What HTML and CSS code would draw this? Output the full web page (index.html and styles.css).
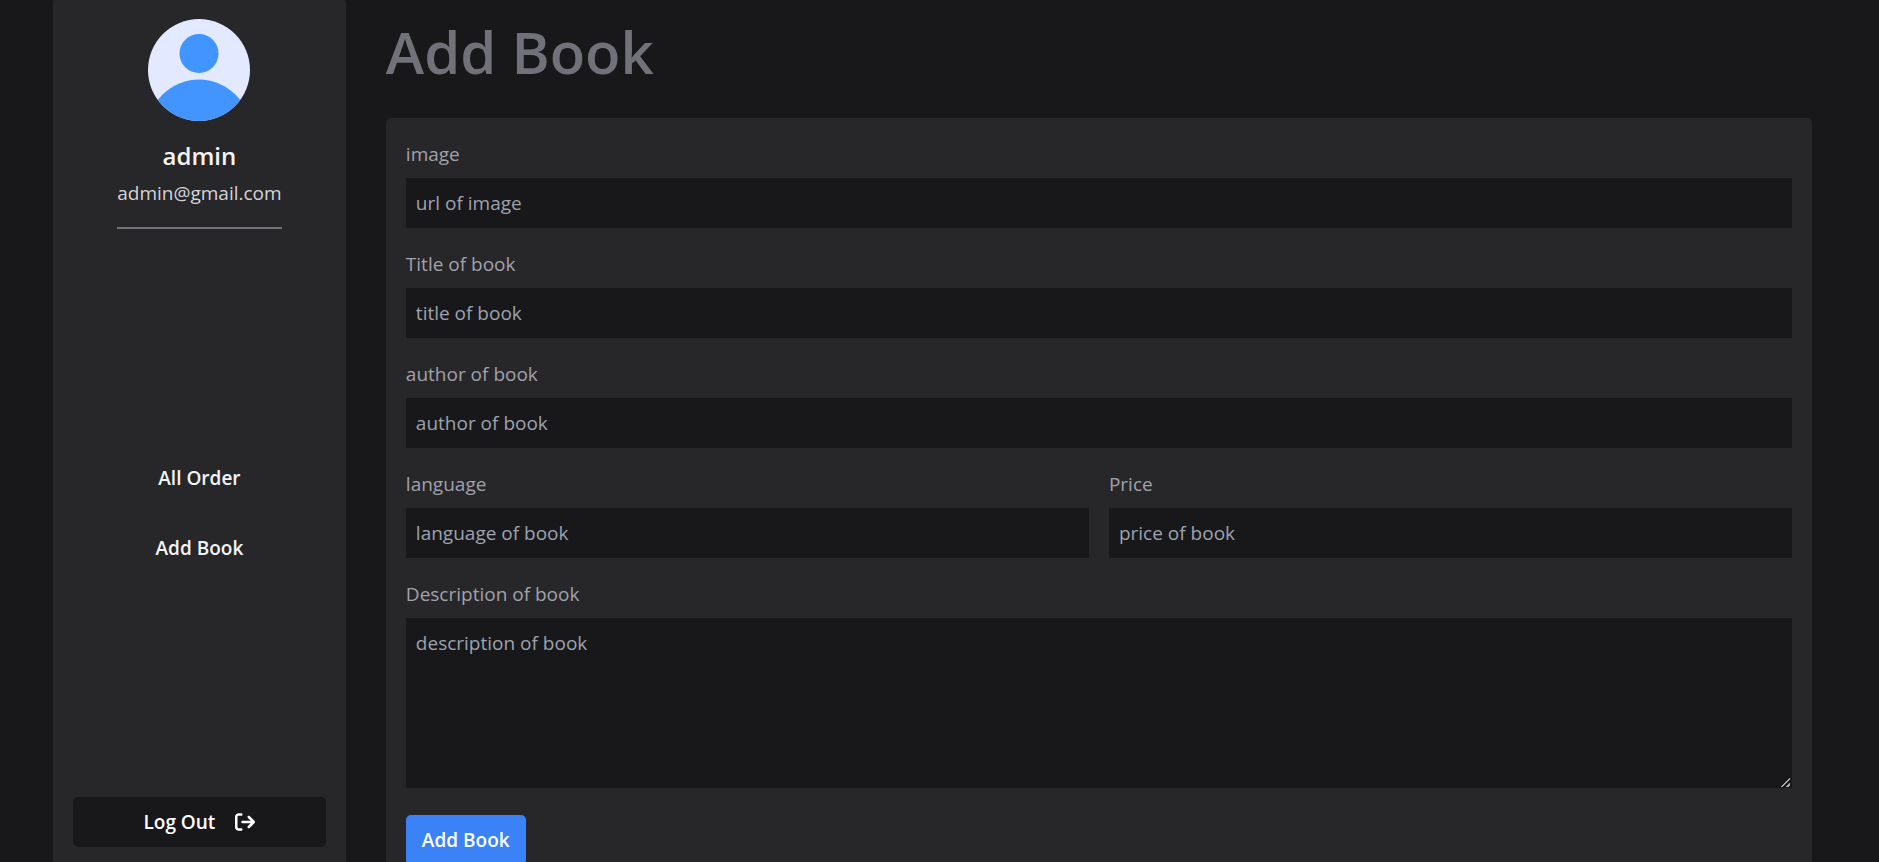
FILE: index.html
```html
<!DOCTYPE html>
<html lang="en">
<head>
<meta charset="utf-8">
<title>Add Book</title>
<link rel="stylesheet" href="styles.css">
</head>
<body>
<div class="layout">
  <aside class="sidebar">
    <div class="profile">
      <svg class="avatar" viewBox="0 0 102 102" role="img" aria-label="Profile picture">
        <defs><clipPath id="disc"><circle cx="51" cy="51" r="51"/></clipPath></defs>
        <circle cx="51" cy="51" r="51" fill="#e3eaff"/>
        <g fill="#4294ff" clip-path="url(#disc)">
          <circle cx="51" cy="34.500" r="19.500"/>
          <circle cx="51" cy="112" r="51.500"/>
        </g>
      </svg>
      <p class="name">admin</p>
      <p class="email">admin@gmail.com</p>
      <div class="rule"></div>
    </div>
    <nav class="menu">
      <a href="#orders">All Order</a>
      <a href="#add">Add Book</a>
    </nav>
    <button class="logout" type="button">Log Out
      <svg class="icon" viewBox="0 0 512 512" aria-hidden="true"><path fill="currentColor" d="M502.600 278.600c12.500-12.500 12.500-32.800 0-45.300l-128-128c-12.500-12.500-32.800-12.500-45.300 0s-12.500 32.800 0 45.300L402.700 224 192 224c-17.700 0-32 14.300-32 32s14.300 32 32 32l210.700 0-73.400 73.400c-12.500 12.500-12.500 32.800 0 45.300s32.800 12.500 45.300 0l128-128zM160 96c17.700 0 32-14.300 32-32s-14.300-32-32-32L96 32C43 32 0 75 0 128L0 384c0 53 43 96 96 96l64 0c17.700 0 32-14.300 32-32s-14.300-32-32-32l-64 0c-17.700 0-32-14.300-32-32l0-256c0-17.700 14.300-32 32-32l64 0z"/></svg>
    </button>
  </aside>
  <main class="content">
    <h1>Add Book</h1>
    <form class="panel">
      <div class="field"><label for="image">image</label><input id="image" type="text" placeholder="url of image"></div>
      <div class="field"><label for="title">Title of book</label><input id="title" type="text" placeholder="title of book"></div>
      <div class="field"><label for="author">author of book</label><input id="author" type="text" placeholder="author of book"></div>
      <div class="row">
        <div class="field"><label for="language">language</label><input id="language" type="text" placeholder="language of book"></div>
        <div class="field"><label for="price">Price</label><input id="price" type="text" placeholder="price of book"></div>
      </div>
      <div class="field"><label for="desc">Description of book</label><textarea id="desc" rows="5" placeholder="description of book"></textarea></div>
      <button class="submit" type="button">Add Book</button>
    </form>
  </main>
</div>
</body>
</html>
```
FILE: styles.css
```css
* { box-sizing: border-box; }

body {
  margin: 0;
  background: #18181a;
  color: #f4f4f5;
  font: 19px/30px "Open Sans", "Noto Sans", sans-serif;
}

h1, p { margin: 0; }

button, input, textarea {
  font: inherit;
  color: inherit;
  border: 0;
}

.layout {
  display: grid;
  grid-template-columns: 14fr 72fr;
  height: 100vh;
  padding: 0 27px 0 53px;
  overflow: hidden;
}

.sidebar {
  display: flex;
  flex-direction: column;
  justify-content: space-between;
  align-items: center;
  height: 100vh;
  padding: 19px 20px 15px;
  background: #27272a;
  border-radius: 2px 2px 0 0;
}

.profile {
  display: flex;
  flex-direction: column;
  align-items: center;
}

.avatar {
  width: 102px;
  height: 102px;
}

.name {
  margin-top: 17px;
  font-size: 24px;
  line-height: 35px;
  font-weight: 600;
}

.email {
  margin-top: 5px;
  color: #d4d4d8;
}

.rule {
  width: 100%;
  height: 2px;
  margin-top: 19px;
  background: #71717a;
}

.menu {
  display: flex;
  flex-direction: column;
  align-items: center;
  gap: 40px;
}

.menu a {
  color: inherit;
  font-weight: 600;
  text-decoration: none;
}

.logout {
  display: flex;
  justify-content: center;
  align-items: center;
  gap: 20px;
  width: 100%;
  padding: 10px;
  border-radius: 5px;
  background: #18181a;
  color: #fff;
  font-weight: 600;
}

.icon {
  width: 20px;
  height: 20px;
}

.content { padding: 19px 40px; }

h1 {
  margin-bottom: 34px;
  color: #71717a;
  font-size: 58px;
  line-height: 65px;
  font-weight: 600;
}

.panel {
  padding: 20px;
  border-radius: 5px;
  background: #27272a;
}

.field {
  display: flex;
  flex-direction: column;
  gap: 8px;
  margin-bottom: 20px;
}

.row {
  display: grid;
  grid-template-columns: 1fr 1fr;
  gap: 20px;
}

label {
  color: #a1a1aa;
  line-height: 32px;
}

input, textarea {
  width: 100%;
  padding: 10px;
  background: #18181a;
  color: #f4f4f5;
}

input { height: 50px; }

textarea {
  display: block;
  height: 170px;
}

textarea::-webkit-resizer {
  background: linear-gradient(315deg, transparent 1px, #aaa 1px 3px, transparent 3px 5px, #aaa 5px 7px, transparent 7px) right 2px bottom 1px / 9px 9px no-repeat;
}

::placeholder { color: #9ca3af; opacity: 1; }

.submit {
  margin-top: 7px;
  padding: 10px 16px;
  border-radius: 5px;
  background: #3b82f6;
  color: #fff;
  font-weight: 600;
}
```
